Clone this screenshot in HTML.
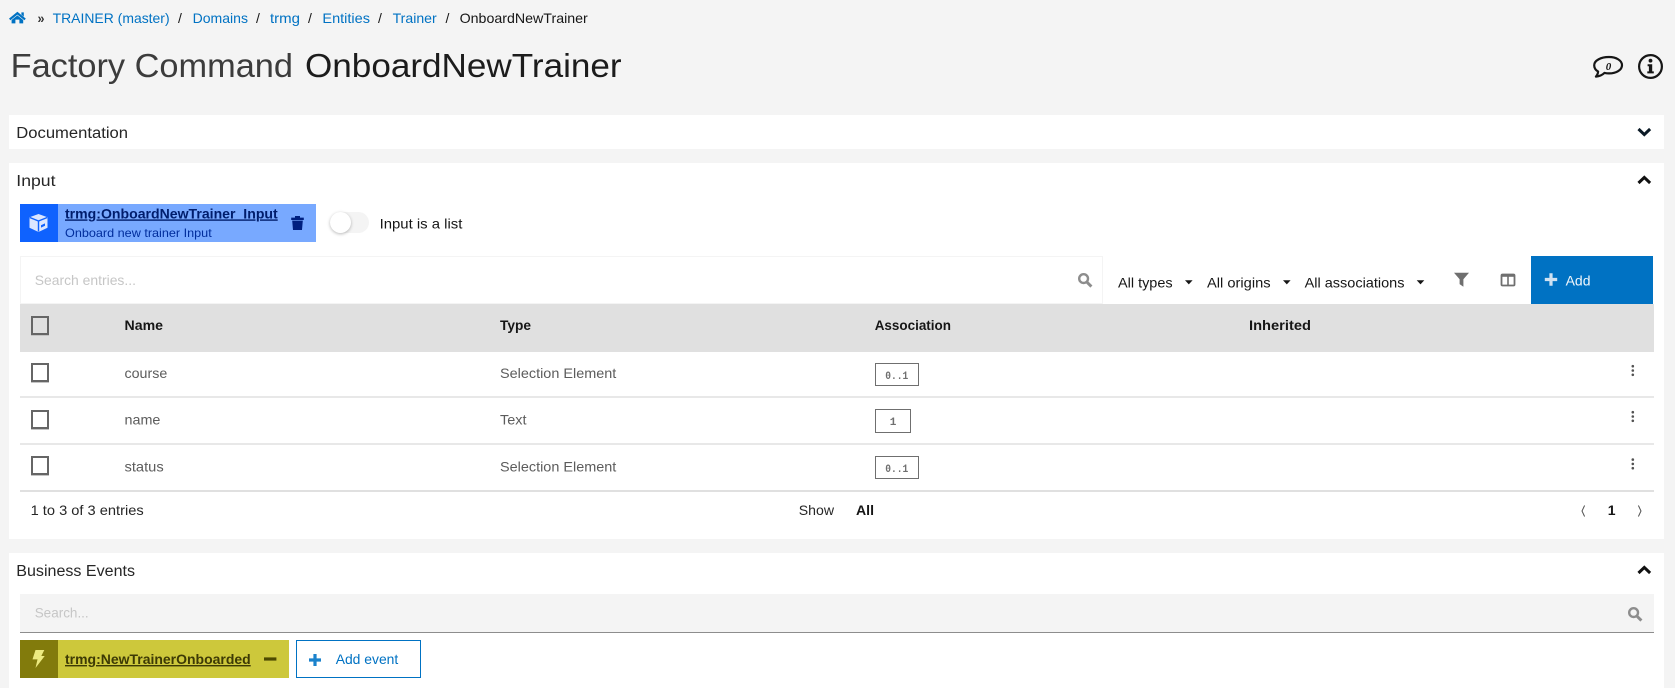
<!DOCTYPE html>
<html lang="en">
<head>
<meta charset="utf-8">
<title>Factory Command OnboardNewTrainer</title>
<style>
html,body{margin:0;padding:0;width:1675px;height:688px;overflow:hidden;background:#f4f4f4}
.b{position:absolute;box-sizing:border-box}
svg{position:absolute;left:0;top:0}
text{font-family:"Liberation Sans",sans-serif;font-size:14px;fill:#161616}
.lnk{fill:#0072c3}
.row{fill:#5c5c5c}
.h{font-weight:bold;fill:#161616;font-size:13.5px}
.sec{font-size:15.5px;fill:#262626}
.ph{fill:#c6c6c6}
.badge{font-family:"Liberation Mono",monospace;font-weight:bold;font-size:11px;fill:#6f6f6f}
.cb{left:30.5px;width:18px;height:18.5px;border:2px solid #666;box-shadow:0 1px 0 #c4c4c4}
</style>
</head>
<body>
<!-- panels -->
<div class="b" style="left:9px;top:115px;width:1655px;height:34px;background:#fff"></div>
<div class="b" style="left:9px;top:163px;width:1655px;height:376px;background:#fff"></div>
<div class="b" style="left:9px;top:553px;width:1655px;height:135px;background:#fff"></div>
<!-- input chip -->
<div class="b" style="left:20px;top:204px;width:296px;height:38px;background:#78a9ff"></div>
<div class="b" style="left:20px;top:204px;width:38px;height:38px;background:#0f62fe"></div>
<!-- toggle -->
<div class="b" style="left:330px;top:212px;width:39px;height:21px;border-radius:11px;background:#f4f4f4"></div>
<div class="b" style="left:330px;top:212px;width:21px;height:21px;border-radius:50%;background:#fff;box-shadow:0 1px 3px rgba(0,0,0,.28)"></div>
<!-- search -->
<div class="b" style="left:20px;top:256px;width:1083px;height:48px;background:#fff;border:1px solid #f4f4f4"></div>
<div class="b" style="left:1531px;top:256px;width:122px;height:48px;background:#0072c3"></div>
<!-- table -->
<div class="b" style="left:20px;top:304px;width:1634px;height:48px;background:#e0e0e0"></div>
<div class="b" style="left:20px;top:396px;width:1634px;height:2px;background:#e8e8e8"></div>
<div class="b" style="left:20px;top:443px;width:1634px;height:2px;background:#e8e8e8"></div>
<div class="b" style="left:20px;top:490px;width:1634px;height:2px;background:#e0e0e0"></div>
<!-- checkboxes -->
<div class="b cb" style="top:316px"></div>
<div class="b cb" style="top:363px"></div>
<div class="b cb" style="top:410px"></div>
<div class="b cb" style="top:456px"></div>
<!-- badges -->
<div class="b" style="left:875px;top:363px;width:44px;height:23px;border:1px solid #6f6f6f"></div>
<div class="b" style="left:875px;top:409px;width:36px;height:24px;border:1px solid #6f6f6f"></div>
<div class="b" style="left:875px;top:456px;width:44px;height:23px;border:1px solid #6f6f6f"></div>
<!-- business events -->
<div class="b" style="left:20px;top:594px;width:1634px;height:39px;background:#f4f4f4;border-bottom:1px solid #8d8d8d"></div>
<div class="b" style="left:20px;top:640px;width:269px;height:38px;background:#cdc83b"></div>
<div class="b" style="left:20px;top:640px;width:38px;height:38px;background:#827b0c"></div>
<div class="b" style="left:296px;top:640px;width:125px;height:38px;background:#fff;border:1px solid #0072c3"></div>

<svg width="1675" height="688" viewBox="0 0 1675 688">
  <!-- home icon -->
  <path d="M17.4 11.8 L25.8 18.6 L24.4 20.2 L17.4 14.6 L10.4 20.2 L9 18.6 Z M21.4 12.4h2.4v4.2L21.4 14.6Z M11.6 20 L17.4 15.4 L23.2 20 V23.4 H19.4 V19.6 H15.4 V23.4 H11.6 Z" fill="#0072c3"/>
  <!-- breadcrumb -->
  <text x="37.5" y="23" style="font-weight:bold;fill:#333" textLength="7" lengthAdjust="spacingAndGlyphs">»</text>
  <text class="lnk" x="52.6" y="23" textLength="117" lengthAdjust="spacingAndGlyphs">TRAINER (master)</text>
  <text x="178" y="23">/</text>
  <text class="lnk" x="192.6" y="23" textLength="55.4" lengthAdjust="spacingAndGlyphs">Domains</text>
  <text x="256" y="23">/</text>
  <text class="lnk" x="270" y="23" textLength="30" lengthAdjust="spacingAndGlyphs">trmg</text>
  <text x="308" y="23">/</text>
  <text class="lnk" x="322.4" y="23" textLength="47.6" lengthAdjust="spacingAndGlyphs">Entities</text>
  <text x="378" y="23">/</text>
  <text class="lnk" x="392.6" y="23" textLength="44.1" lengthAdjust="spacingAndGlyphs">Trainer</text>
  <text x="445.5" y="23">/</text>
  <text x="459.6" y="23" textLength="128.2" lengthAdjust="spacingAndGlyphs">OnboardNewTrainer</text>
  <!-- title -->
  <text x="10.6" y="77" style="font-size:33px;fill:#3c3c3c" textLength="282.4" lengthAdjust="spacingAndGlyphs">Factory Command</text>
  <text x="305" y="77" style="font-size:33px;fill:#1c1c1c" textLength="316.6" lengthAdjust="spacingAndGlyphs">OnboardNewTrainer</text>
  <!-- comment icon -->
  <path d="M1609 57c7.4 0 13 3.6 13 8.2s-5.6 8.2-13 8.2c-1.6 0-3.1-.2-4.5-.5-2 2-4.6 3.4-8.6 3.7 1.4-1.5 2.1-3 2.2-5-2.4-1.5-3.9-3.8-3.9-6.4 0-4.6 6.5-8.2 14.8-8.2z" fill="none" stroke="#161616" stroke-width="2.2" stroke-linejoin="round"/>
  <text x="1608.5" y="70" text-anchor="middle" style="font-family:'Liberation Serif',serif;font-style:italic;font-weight:bold;font-size:11px">0</text>
  <!-- info icon -->
  <circle cx="1650.5" cy="66.5" r="11.4" fill="none" stroke="#161616" stroke-width="2.2"/>
  <circle cx="1650.5" cy="60.7" r="1.9" fill="#161616"/>
  <path d="M1647.6 64.2h4.6v7.2h1.6v2h-6.5v-2h1.6v-5.2h-1.3z" fill="#161616"/>
  <!-- section heads -->
  <text class="sec" x="16.3" y="138" textLength="111.7" lengthAdjust="spacingAndGlyphs">Documentation</text>
  <text class="sec" x="16.3" y="186" textLength="39.2" lengthAdjust="spacingAndGlyphs">Input</text>
  <text class="sec" x="16.3" y="576" textLength="118.7" lengthAdjust="spacingAndGlyphs">Business Events</text>
  <!-- chevrons -->
  <path d="M1638.5 129l5.8 5.6 5.8-5.6" fill="none" stroke="#0b1a26" stroke-width="3"/>
  <path d="M1638.5 183l5.8-5.6 5.8 5.6" fill="none" stroke="#111" stroke-width="3"/>
  <path d="M1638.5 573l5.8-5.6 5.8 5.6" fill="none" stroke="#111" stroke-width="3"/>
  <!-- input chip content -->
  <path d="M38.5 214l9 3.3v10.4l-9 4.3-9-4.3V217.3z" fill="#dbe6ff"/>
  <path d="M29.8 217.5l8.7 3.5 8.7-3.5M38.5 221v10.5" fill="none" stroke="#0f62fe" stroke-width="1.4"/>
  <path d="M41 225.2l4-1.8v2.4l-4 1.8z" fill="#0f62fe"/>
  <text x="65" y="218.4" style="font-weight:bold;fill:#001d6c;text-decoration:underline" textLength="212.7" lengthAdjust="spacingAndGlyphs">trmg:OnboardNewTrainer_Input</text>
  <text x="65" y="237" style="font-size:12px;fill:#002d9c" textLength="146.7" lengthAdjust="spacingAndGlyphs">Onboard new trainer Input</text>
  <path d="M291.2 217.6h12.6v2.4h-12.6zM295 216h5v2h-5zM292.2 220.6h10.6l-.8 9.4h-9z" fill="#002080"/>
  <text x="379.6" y="228.7" textLength="82.8" lengthAdjust="spacingAndGlyphs">Input is a list</text>
  <!-- search row -->
  <text class="ph" x="34.7" y="285" textLength="101.3" lengthAdjust="spacingAndGlyphs">Search entries...</text>
  <circle cx="1083.6" cy="278.6" r="4.4" fill="none" stroke="#8d8d8d" stroke-width="2.4"/>
  <path d="M1086.8 282l4.6 4.6" stroke="#8d8d8d" stroke-width="3" fill="none"/>
  <text x="1118" y="287.3" textLength="54.6" lengthAdjust="spacingAndGlyphs">All types</text>
  <path d="M1185 280.2h7.6l-3.8 4.2z" fill="#161616"/>
  <text x="1207" y="287.3" textLength="63.6" lengthAdjust="spacingAndGlyphs">All origins</text>
  <path d="M1283 280.2h7.6l-3.8 4.2z" fill="#161616"/>
  <text x="1304.6" y="287.3" textLength="99.9" lengthAdjust="spacingAndGlyphs">All associations</text>
  <path d="M1416.7 280.2h7.6l-3.8 4.2z" fill="#161616"/>
  <path d="M1454 272.7h15l-5.6 6.6v7.4l-3.8-2.6v-4.8z" fill="#6f6f6f"/>
  <rect x="1501.5" y="274.5" width="13" height="11" rx="1" fill="none" stroke="#6f6f6f" stroke-width="1.8"/>
  <path d="M1501.5 275.5h13" stroke="#6f6f6f" stroke-width="2.6"/>
  <path d="M1508 275v10.5" stroke="#6f6f6f" stroke-width="1.6"/>
  <path d="M1551 273.2v12.6M1544.8 279.5h12.4" stroke="#cfe2f2" stroke-width="3.2"/>
  <text x="1565.6" y="285.3" style="fill:#f0f6fb" textLength="24.9" lengthAdjust="spacingAndGlyphs">Add</text>
  <!-- table head -->
  <text class="h" x="124.5" y="330" textLength="38.5" lengthAdjust="spacingAndGlyphs">Name</text>
  <text class="h" x="500" y="330" textLength="31" lengthAdjust="spacingAndGlyphs">Type</text>
  <text class="h" x="874.7" y="330" textLength="76.3" lengthAdjust="spacingAndGlyphs">Association</text>
  <text class="h" x="1249" y="330" textLength="62" lengthAdjust="spacingAndGlyphs">Inherited</text>
  <!-- rows -->
  <text class="row" x="124.5" y="378" textLength="42.8" lengthAdjust="spacingAndGlyphs">course</text>
  <text class="row" x="500" y="378" textLength="116.3" lengthAdjust="spacingAndGlyphs">Selection Element</text>
  <text class="badge" x="885.3" y="379" textLength="23" lengthAdjust="spacingAndGlyphs">0..1</text>
  <text class="row" x="124.5" y="424.3" textLength="35.9" lengthAdjust="spacingAndGlyphs">name</text>
  <text class="row" x="500" y="424.3" textLength="26.5" lengthAdjust="spacingAndGlyphs">Text</text>
  <text class="badge" x="893" y="425" text-anchor="middle">1</text>
  <text class="row" x="124.5" y="471.3" textLength="39.2" lengthAdjust="spacingAndGlyphs">status</text>
  <text class="row" x="500" y="471.3" textLength="116.3" lengthAdjust="spacingAndGlyphs">Selection Element</text>
  <text class="badge" x="885.3" y="472" textLength="23" lengthAdjust="spacingAndGlyphs">0..1</text>
  <!-- kebabs -->
  <g fill="#525252">
    <circle cx="1632.8" cy="366.2" r="1.3"/><circle cx="1632.8" cy="370.5" r="1.3"/><circle cx="1632.8" cy="374.8" r="1.3"/>
    <circle cx="1632.8" cy="412.2" r="1.3"/><circle cx="1632.8" cy="416.5" r="1.3"/><circle cx="1632.8" cy="420.8" r="1.3"/>
    <circle cx="1632.8" cy="459.6" r="1.3"/><circle cx="1632.8" cy="463.9" r="1.3"/><circle cx="1632.8" cy="468.2" r="1.3"/>
  </g>
  <!-- footer -->
  <text x="30.6" y="515" style="fill:#262626" textLength="113.1" lengthAdjust="spacingAndGlyphs">1 to 3 of 3 entries</text>
  <text x="798.8" y="515" style="fill:#262626" textLength="35.2" lengthAdjust="spacingAndGlyphs">Show</text>
  <text x="856" y="515" style="font-weight:bold" textLength="18" lengthAdjust="spacingAndGlyphs">All</text>
  <path d="M1584.6 505.5l-2.6 5.5 2.6 5.5" fill="none" stroke="#525252" stroke-width="1"/>
  <text x="1611.6" y="515" text-anchor="middle" style="font-weight:bold">1</text>
  <path d="M1638.4 505.5l2.6 5.5-2.6 5.5" fill="none" stroke="#525252" stroke-width="1"/>
  <!-- business events -->
  <text class="ph" x="34.7" y="617.7" textLength="54" lengthAdjust="spacingAndGlyphs">Search...</text>
  <circle cx="1633.6" cy="612.6" r="4.4" fill="none" stroke="#8d8d8d" stroke-width="2.4"/>
  <path d="M1636.8 616l4.6 4.6" stroke="#8d8d8d" stroke-width="3" fill="none"/>
  <path d="M35.5 650h8.8l-3 6h3.4L35.5 668l2-8.6H32.5z" fill="#ecea80"/>
  <text x="65" y="664" style="font-weight:bold;fill:#3d3a05;text-decoration:underline" textLength="185.7" lengthAdjust="spacingAndGlyphs">trmg:NewTrainerOnboarded</text>
  <rect x="264" y="657.4" width="12.4" height="3.2" fill="#4d4a00"/>
  <path d="M315 654v12M309 660h12" stroke="#1a82cc" stroke-width="3.2"/>
  <text class="lnk" x="335.7" y="664" textLength="62.6" lengthAdjust="spacingAndGlyphs">Add event</text>
</svg>
</body>
</html>
